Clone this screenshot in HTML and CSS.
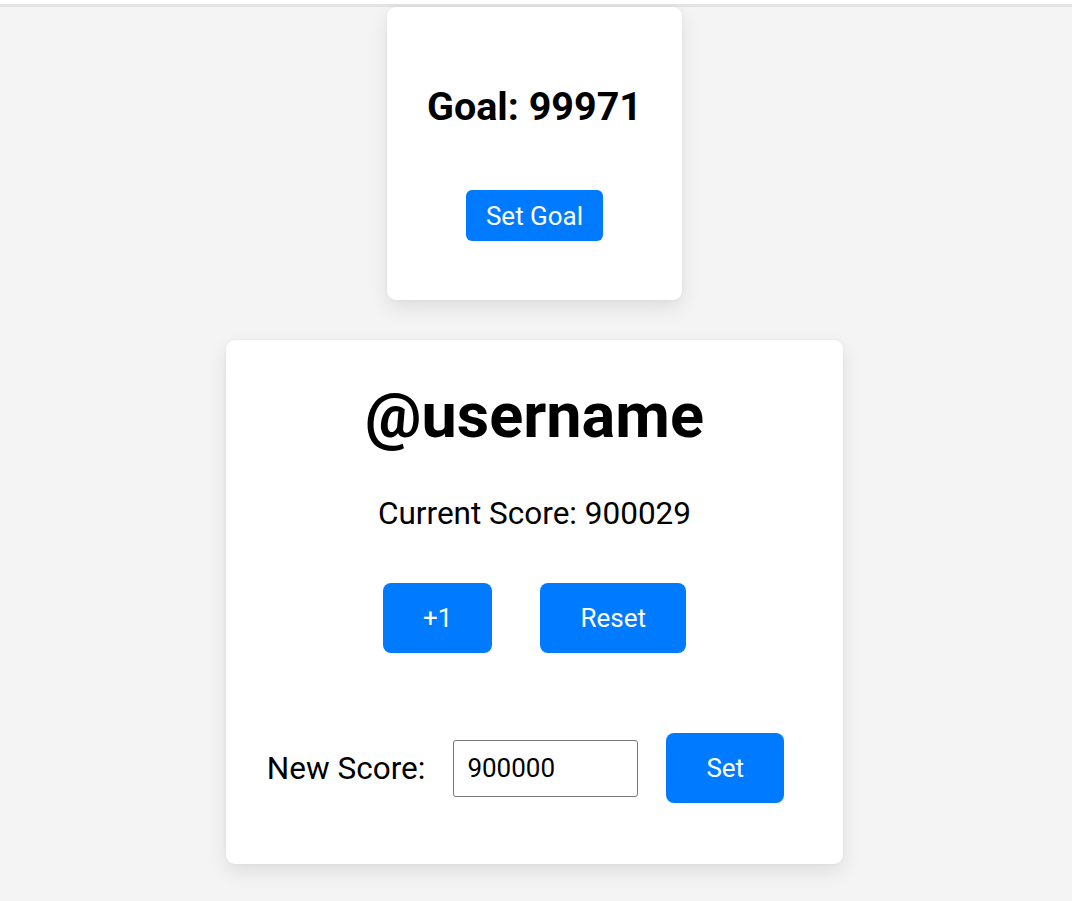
FILE: index.html
```html
<!DOCTYPE html>
<html>
<head>
<meta charset="utf-8">
<link rel="stylesheet" href="styles.css">
</head>
<body>
<div class="topbar"></div>
<main class="page">
  <section class="card goal-card">
    <h2 class="goal-title">Goal: 99971</h2>
    <button class="btn btn-small">Set Goal</button>
  </section>
  <section class="card user-card">
    <h1 class="username">@username</h1>
    <p class="score">Current Score: 900029</p>
    <div class="actions">
      <button class="btn btn-big">+1</button>
      <button class="btn btn-big">Reset</button>
    </div>
    <div class="set-row">
      <label class="set-label" for="ns">New Score:</label>
      <input id="ns" class="set-input" type="text" value="900000">
      <button class="btn btn-big btn-set">Set</button>
    </div>
  </section>
</main>
</body>
</html>
```

FILE: styles.css
```css
* { box-sizing: border-box; }
html, body {
  margin: 0;
  padding: 0;
  background: #f4f4f4;
  font-family: Roboto, "Noto Sans", Arial, sans-serif;
  color: #000;
}
.topbar {
  height: 7px;
  background: #ffffff;
  border-bottom: 3px solid #e3e3e3;
}
.page {
  display: flex;
  flex-direction: column;
  align-items: center;
  gap: 40px;
  padding-right: 3px;
  padding-bottom: 40px;
}
.card {
  background: #fff;
  border-radius: 9px;
  box-shadow: 0 8px 20px rgba(0,0,0,0.09), 0 0 5px rgba(0,0,0,0.04);
  display: flex;
  flex-direction: column;
  align-items: center;
}
.goal-card {
  width: 295px;
  height: 293px;
  padding-top: 76px;
}
.goal-title {
  margin: 0;
  font-size: 39.5px;
  line-height: 48px;
  font-weight: 700;
}
.btn {
  background: #007bff;
  color: #fff;
  border: none;
  font-family: Roboto, "Noto Sans", Arial, sans-serif;
  cursor: pointer;
}
.btn-small {
  margin-top: 59px;
  height: 51px;
  padding: 0 20px;
  border-radius: 6px;
  font-size: 26px;
}
.user-card {
  width: 617px;
  padding: 40px 0 61px;
}
.username {
  margin: 0;
  font-size: 63px;
  line-height: 72px;
  font-weight: 700;
}
.score {
  margin: 44px 0 0;
  font-size: 31.5px;
  line-height: 36px;
}
.actions {
  margin-top: 51px;
  display: flex;
  gap: 48px;
}
.btn-big {
  height: 70px;
  padding: 0 40px;
  border-radius: 8px;
  font-size: 26px;
}
.set-row {
  margin-top: 80px;
  display: flex;
  align-items: center;
  gap: 28px;
  padding-right: 18px;
}
.set-label {
  font-size: 31.5px;
}
.set-input {
  width: 185px;
  height: 57px;
  border: 1px solid #767676;
  border-radius: 3px;
  padding: 0 13px;
  font-family: Roboto, "Noto Sans", Arial, sans-serif;
  font-size: 26px;
  color: #000;
  background: #fff;
}
```
